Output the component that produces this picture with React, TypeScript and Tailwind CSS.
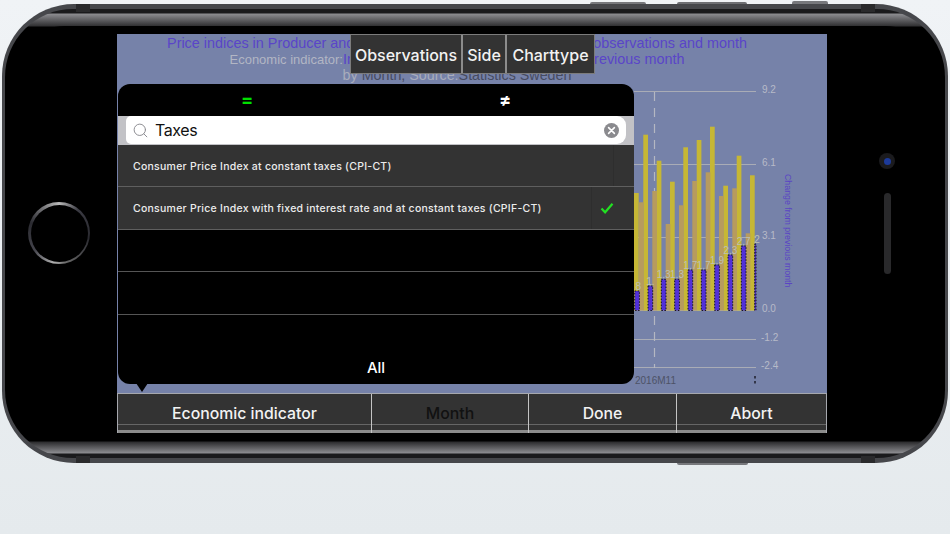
import { Search } from "lucide-react";

const yellowBars = [
  [634, 193],
  [643.3, 134.7],
  [656.7, 160.7],
  [670, 181.7],
  [683.3, 147.3],
  [696.7, 140],
  [710, 126.7],
  [723.3, 185.7],
  [736.7, 155.7],
  [750, 175.3],
];

const orangeBars = [
  [639, 202.3],
  [652.3, 191],
  [665.7, 224],
  [679, 205.3],
  [692.3, 181],
  [705.7, 172.3],
  [719, 196],
  [732.3, 188.3],
  [745.7, 233.3],
];

const purpleBars = [
  { x: 634.7, top: 291, label: ".8" },
  { x: 648, top: 286, label: "1." },
  { x: 661.3, top: 279.3, label: "1.3" },
  { x: 674.7, top: 279.3, label: "1.3" },
  { x: 688, top: 270, label: "1.7" },
  { x: 701.3, top: 270, label: "1.7" },
  { x: 714.7, top: 265, label: "1.9" },
  { x: 728, top: 255, label: "2.3" },
  { x: 741.3, top: 246, label: "2.7" },
  { x: 754.7, top: 244, label: "2" },
];

const gridLines = [
  { y: 91.5, label: "9.2" },
  { y: 164.5, label: "6.1" },
  { y: 237.5, label: "3.1" },
  { y: 310.5, label: "0.0" },
  { y: 339.5, label: "-1.2" },
  { y: 367.5, label: "-2.4" },
];

function Chart() {
  return (
    <svg viewBox="117 84 710 309" className="block h-[309px] w-[710px]" fontFamily="'Liberation Sans', sans-serif">
      {gridLines.map((g) => (
        <g key={g.label}>
          <line x1="634" x2="756" y1={g.y} y2={g.y} stroke="#a9acb6" strokeWidth="1" />
          <text x={g.label.startsWith("-") ? 761 : 762} y={g.y + 1} fontSize="10" fill="#b6bac8">
            {g.label}
          </text>
        </g>
      ))}
      <line x1="654.5" x2="654.5" y1="92" y2="368" stroke="#b4b7c2" strokeWidth="1.2" strokeDasharray="9 7" />
      {yellowBars.map(([x, top]) => (
        <rect key={x} x={x} y={top} width="4.7" height={310.5 - top} fill="#c6b735" />
      ))}
      {orangeBars.map(([x, top]) => (
        <rect key={x} x={x} y={top} width="4.7" height={310.5 - top} fill="#b79b5e" />
      ))}
      {purpleBars.map((b) => (
        <rect
          key={b.x}
          x={b.x}
          y={b.top}
          width={Math.min(4.7, 756 - b.x)}
          height={310.5 - b.top}
          fill="#5230d8"
          stroke="#15151f"
          strokeWidth="1"
          strokeDasharray="1.5 1.5"
        />
      ))}
      {purpleBars.map((b) => (
        <text key={b.x} x={b.x + 2.3} y={b.top - 1.5} fontSize="10" textAnchor="middle" fill="#bcc0b4">
          {b.label}
        </text>
      ))}
      <text x="635" y="384" fontSize="10" fill="#4d5266">
        2016M11
      </text>
      <rect x="754" y="376" width="2" height="2.5" fill="#33364a" />
      <rect x="754" y="381" width="2" height="2.5" fill="#33364a" />
      <text transform="translate(785 174) rotate(90)" fontSize="8.8" fill="#5a45c4">
        Change from previous month
      </text>
    </svg>
  );
}

function Popover() {
  return (
    <div className="absolute left-[1px] top-[50px] flex h-[300px] w-[516px] flex-col rounded-[12px] bg-black font-['Inter',sans-serif]">
      <div className="grid h-[32px] shrink-0 grid-cols-2 text-[18px] font-bold">
        <div className="flex items-center justify-center text-[#00e000]">=</div>
        <div className="flex items-center justify-center text-white">≠</div>
      </div>
      <div className="h-[29px] shrink-0 bg-[#c2c2c6] px-[8px]">
        <div className="flex h-[28.5px] items-center rounded-l-[5px] rounded-r-[9px] bg-white pl-[6px] pr-[7px]">
          <Search className="size-[17px] text-[#8e8e93]" strokeWidth={1.4} />
          <span className="ml-[6px] text-[16px] tracking-[-0.4px] text-[#111]">Taxes</span>
          <span className="ml-auto flex size-[15px] items-center justify-center rounded-full bg-[#8a8a8e]">
            <svg viewBox="0 0 15 15" className="size-[15px]">
              <path d="M4.6 4.6l5.8 5.8M10.4 4.6l-5.8 5.8" stroke="#fff" strokeWidth="1.6" strokeLinecap="round" />
            </svg>
          </span>
        </div>
      </div>
      <div className="flex h-[42.5px] shrink-0 border-b border-[#5f5f5f] bg-[#333]">
        <div className="flex w-[496px] items-center border-r border-[#2e2e2e] pl-[15px] pt-[2px] text-[10.5px] font-medium tracking-[0.25px] text-[#ececec]">
          Consumer Price Index at constant taxes (CPI-CT)
        </div>
      </div>
      <div className="flex h-[42.5px] shrink-0 border-b border-[#5f5f5f] bg-[#333]">
        <div className="flex w-[474px] items-center border-r border-[#2e2e2e] pl-[15px] pt-[2px] text-[10.5px] font-medium tracking-[0.25px] text-[#ececec]">
          Consumer Price Index with fixed interest rate and at constant taxes (CPIF-CT)
        </div>
        <div className="flex flex-1 items-center pl-[8px]">
          <svg viewBox="0 0 14 12" className="h-[12px] w-[14px]">
            <path d="M1.5 6.5l3.6 3.8L12.5 1.8" fill="none" stroke="#22e022" strokeWidth="2.2" />
          </svg>
        </div>
      </div>
      <div className="h-[42.5px] shrink-0 border-b border-[#555]" />
      <div className="h-[42.5px] shrink-0 border-b border-[#555]" />
      <div className="flex flex-1 items-end justify-center pb-[4px] text-[15px] font-medium text-white">All</div>
      <div className="absolute left-[18px] top-[299px] h-0 w-0 border-x-[6px] border-t-[9px] border-x-transparent border-t-black" />
    </div>
  );
}

function ToolbarButton({ width, label, dim }: { width: string; label: string; dim?: boolean }) {
  return (
    <div className={`${width} flex flex-col border-r border-[#c4c4c4] last:border-r-0`}>
      <div className={`flex h-[30px] items-center justify-center pt-[11px] ${dim ? "text-[#111]" : ""}`}>{label}</div>
      <div className="h-[6px] border-t border-[#666]" />
      <div className="h-[3px] bg-[#8b8b8b]" />
    </div>
  );
}

function Screen() {
  return (
    <div className="relative h-[399px] w-[710px] overflow-hidden bg-[#7682a9] font-['Liberation_Sans',sans-serif]">
      <div className="h-[50px] overflow-hidden pr-[30px] pt-[1px] text-center">
        <p className="h-[16px] whitespace-nowrap text-[14.4px] leading-[16px] text-[#5a45c8]">
          Price indices in Producer and Import Prices by economic indicator, observations and month
        </p>
        <p className="h-[16px] whitespace-nowrap text-[14.4px] leading-[16px] text-[#5a45c8]">
          <span className="text-[13px] text-[#b2b6c4]">Economic indicator:</span>
          Index at constant taxes, Change from previous month
        </p>
        <p className="h-[17px] whitespace-nowrap text-[14.3px] leading-[17px] text-[#464b60]">
          <span className="text-[#a9adbc]">by </span>
          Month, <span className="text-[#a9adbc]">Source:</span>Statistics Sweden
        </p>
      </div>

      <Chart />

      <div className="flex h-[40px] border-x border-t border-[#a6a8ae] bg-[#333] font-['Inter',sans-serif] text-[15.8px] font-medium text-[#f2f2f2]">
        <ToolbarButton width="w-[254px]" label="Economic indicator" />
        <ToolbarButton width="w-[157px]" label="Month" dim />
        <ToolbarButton width="w-[148px]" label="Done" />
        <ToolbarButton width="flex-1" label="Abort" />
      </div>

      <div className="absolute left-[233px] top-0 flex h-[40px] border border-[#7c7c7c] bg-[#333] font-['Inter',sans-serif] text-[16px] font-medium text-[#f2f2f2]">
        <div className="flex w-[112px] items-center justify-center border-r-2 border-[#8c8c8c] pt-[2px]">Observations</div>
        <div className="flex w-[44px] items-center justify-center border-r-2 border-[#8c8c8c] pt-[2px]">Side</div>
        <div className="flex w-[87px] items-center justify-center pt-[2px]">Charttype</div>
      </div>

      <Popover />
    </div>
  );
}

export default function App() {
  return (
    <div className="relative h-[534px] w-[950px] overflow-hidden bg-[linear-gradient(180deg,#f0f3f6,#e5eaed)]">
      {/* side buttons */}
      <div className="absolute left-[590px] top-[2px] h-[4px] w-[56px] rounded-t-[2px] bg-[#77787c]" />
      <div className="absolute left-[677px] top-[2px] h-[4px] w-[70px] rounded-t-[2px] bg-[#6e6f73]" />
      <div className="absolute left-[792px] top-[1px] h-[5px] w-[36px] rounded-t-[2px] bg-[#77787c]" />
      <div className="absolute left-[677px] top-[461px] h-[4px] w-[71px] rounded-b-[2px] bg-[#77787c]" />

      <div className="absolute left-[2px] top-[4px] h-[459px] w-[946px] rounded-[72px] bg-[#46474b] p-[3px] pb-[5px] pt-[4.5px]">
        <div className="h-full w-full rounded-[68px] bg-[linear-gradient(180deg,#1a1a1c_0px,#1a1a1c_4px,#8c8c90_5px,#303032_17px,#000_18px,#000_calc(100%-17px),#2c2c2e_calc(100%-16px),#8c8c90_calc(100%-5px),#1a1a1c_calc(100%-4px),#1a1a1c_100%)] p-[6px] pb-[17px] pt-[17px]">
          <div className="relative flex h-full w-full items-center rounded-[54px] bg-black">
            {/* home button */}
            <div className="ml-[17px] flex size-[62px] shrink-0 items-center justify-center rounded-full bg-[conic-gradient(#b8b8b8_0deg,#3a3a42_40deg,#2a2a30_100deg,#666_165deg,#b0b0b0_190deg,#44444c_235deg,#2a2a30_290deg,#b8b8b8_360deg)]">
              <div className="size-[57px] rounded-full bg-black" />
            </div>

            <div className="ml-[27px] shrink-0">
              <Screen />
            </div>

            <div className="ml-[52px] flex flex-col items-center gap-[24px] pb-[39px]">
              <div className="flex size-[16px] items-center justify-center rounded-full bg-[#1b1b1e]">
                <div className="size-[7px] rounded-full bg-[#1c3a9a]" />
              </div>
              <div className="h-[81px] w-[7px] rounded-full bg-[#29292b]" />
            </div>
          </div>
        </div>
      </div>

      {/* antenna bands */}
      <div className="absolute left-[76px] top-[4px] h-[8px] w-[14px] bg-[#2a2a2c]" />
      <div className="absolute left-[861px] top-[4px] h-[8px] w-[14px] bg-[#2a2a2c]" />
      <div className="absolute left-[76px] top-[456px] h-[7px] w-[14px] bg-[#2a2a2c]" />
      <div className="absolute left-[861px] top-[456px] h-[7px] w-[14px] bg-[#2a2a2c]" />
    </div>
  );
}
